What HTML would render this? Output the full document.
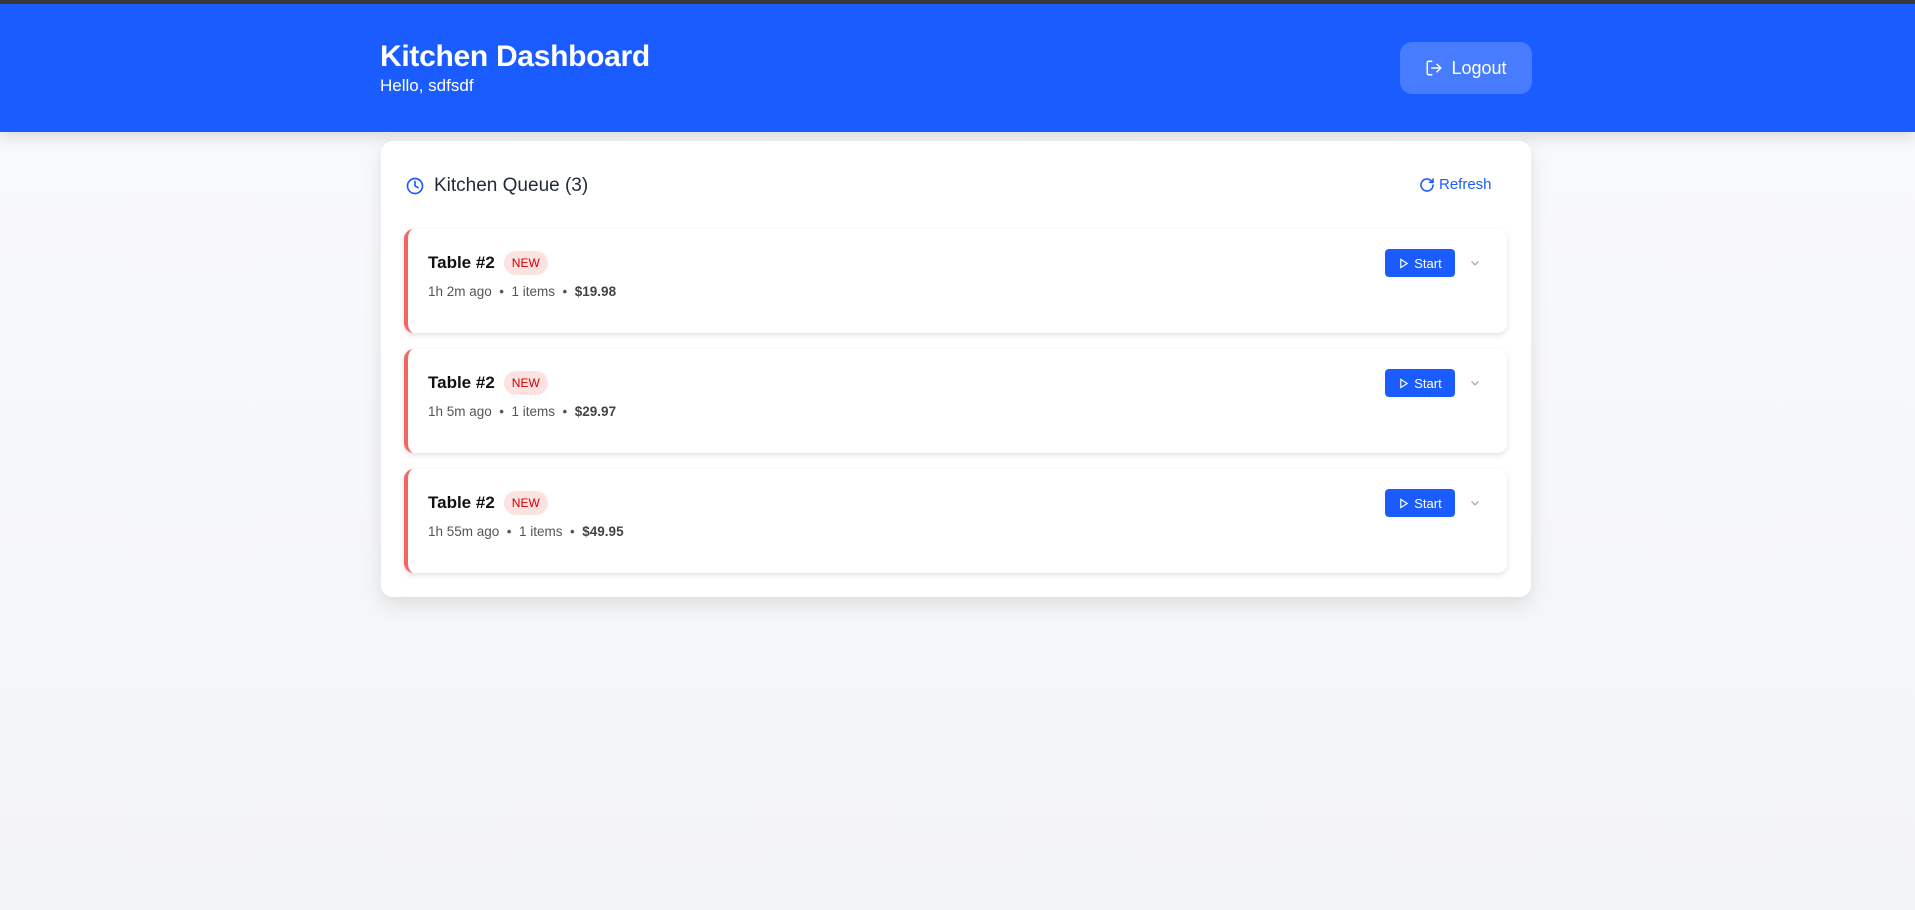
<!DOCTYPE html>
<html><head><meta charset="utf-8"><style>
*{box-sizing:border-box;margin:0;padding:0}
body{width:1915px;height:910px;background:linear-gradient(#f9fafb,#f3f4f6);font-family:"Liberation Sans",sans-serif;position:relative;overflow:hidden}
.top{position:absolute;left:0;top:0;width:1915px;height:4px;background:#3a3a3a}
.hdr{position:absolute;left:0;top:4px;width:1915px;height:128px;background:#1a5cff;box-shadow:0 6px 14px rgba(0,0,0,.12)}
.h1{position:absolute;left:380px;top:40px;color:#fff;font-size:30px;font-weight:bold;letter-spacing:-.3px}
.hello{position:absolute;left:380px;top:76px;color:#fff;font-size:17px}
.logout{position:absolute;left:1400px;top:42px;width:132px;height:52px;border-radius:12px;background:rgba(255,255,255,.2);color:#fff;font-size:18px;display:flex;align-items:center;justify-content:center;gap:8px}
.panel{position:absolute;left:381px;top:141px;width:1150px;height:456px;background:#fff;border-radius:12px;box-shadow:0 8px 20px rgba(0,0,0,.1)}
.qt{position:absolute;left:25px;top:34px;display:flex;align-items:center;gap:10px;font-size:19px;color:#1f2937}
.ref{position:absolute;left:1038px;top:35px;display:flex;align-items:center;gap:4px;color:#1a5cff;font-size:15px}
.card{position:absolute;left:23px;width:1103px;height:104px;background:#fff;border-radius:10px;border-left:4px solid #f56565;box-shadow:0 2px 6px rgba(0,0,0,.12)}
.tt{position:absolute;left:20px;top:22px;display:flex;align-items:center;gap:9px;font-size:17px;font-weight:bold;color:#111}
.new{background:#fde2e2;color:#c00;font-size:12px;font-weight:normal;padding:5px 8px;border-radius:12px}
.meta{position:absolute;left:20px;top:55px;font-size:13.5px;color:#555}
.meta b{color:#444;font-weight:bold}
.start{position:absolute;left:977px;top:20px;width:70px;height:28px;background:#1a5cff;border-radius:4px;color:#fff;font-size:13px;display:flex;align-items:center;justify-content:center;gap:5px}
.chev{position:absolute;left:1060px;top:27px}
</style></head><body>
<div class="top"></div>
<div class="hdr"></div>
<div class="h1">Kitchen Dashboard</div>
<div class="hello">Hello, sdfsdf</div>
<div class="logout"><svg width="18" height="18" viewBox="0 0 24 24" fill="none" stroke="#fff" stroke-width="2" stroke-linecap="round" stroke-linejoin="round"><path d="M9 21H5a2 2 0 0 1-2-2V5a2 2 0 0 1 2-2h4"/><path d="M16 17l5-5-5-5"/><path d="M21 12H9"/></svg>Logout</div>
<div class="panel">
<div class="qt"><svg width="18" height="18" viewBox="0 0 24 24" fill="none" stroke="#1a5cff" stroke-width="2.2" stroke-linecap="round"><circle cx="12" cy="12" r="10"/><path d="M12 6v6l4 2"/></svg>Kitchen Queue (3)</div>
<div class="ref"><svg width="16" height="16" viewBox="0 0 24 24" fill="none" stroke="#1a5cff" stroke-width="2.4" stroke-linecap="round" stroke-linejoin="round"><path d="M21 12a9 9 0 1 1-3-6.7L21 8"/><path d="M21 3v5h-5"/></svg>Refresh</div>
<div class="card" style="top:88px"><div class="tt">Table #2 <span class="new">NEW</span></div><div class="meta">1h 2m ago &nbsp;•&nbsp; 1 items &nbsp;•&nbsp; <b>$19.98</b></div><div class="start"><svg width="11" height="11" viewBox="0 0 24 24" fill="none" stroke="#fff" stroke-width="2.5"><path d="M6 3l14 9-14 9z"/></svg>Start</div><svg class="chev" width="14" height="14" viewBox="0 0 24 24" fill="none" stroke="#9ca3af" stroke-width="2"><path d="M6 9l6 6 6-6"/></svg></div>
<div class="card" style="top:208px"><div class="tt">Table #2 <span class="new">NEW</span></div><div class="meta">1h 5m ago &nbsp;•&nbsp; 1 items &nbsp;•&nbsp; <b>$29.97</b></div><div class="start"><svg width="11" height="11" viewBox="0 0 24 24" fill="none" stroke="#fff" stroke-width="2.5"><path d="M6 3l14 9-14 9z"/></svg>Start</div><svg class="chev" width="14" height="14" viewBox="0 0 24 24" fill="none" stroke="#9ca3af" stroke-width="2"><path d="M6 9l6 6 6-6"/></svg></div>
<div class="card" style="top:328px"><div class="tt">Table #2 <span class="new">NEW</span></div><div class="meta">1h 55m ago &nbsp;•&nbsp; 1 items &nbsp;•&nbsp; <b>$49.95</b></div><div class="start"><svg width="11" height="11" viewBox="0 0 24 24" fill="none" stroke="#fff" stroke-width="2.5"><path d="M6 3l14 9-14 9z"/></svg>Start</div><svg class="chev" width="14" height="14" viewBox="0 0 24 24" fill="none" stroke="#9ca3af" stroke-width="2"><path d="M6 9l6 6 6-6"/></svg></div>
</div>
</body></html>
